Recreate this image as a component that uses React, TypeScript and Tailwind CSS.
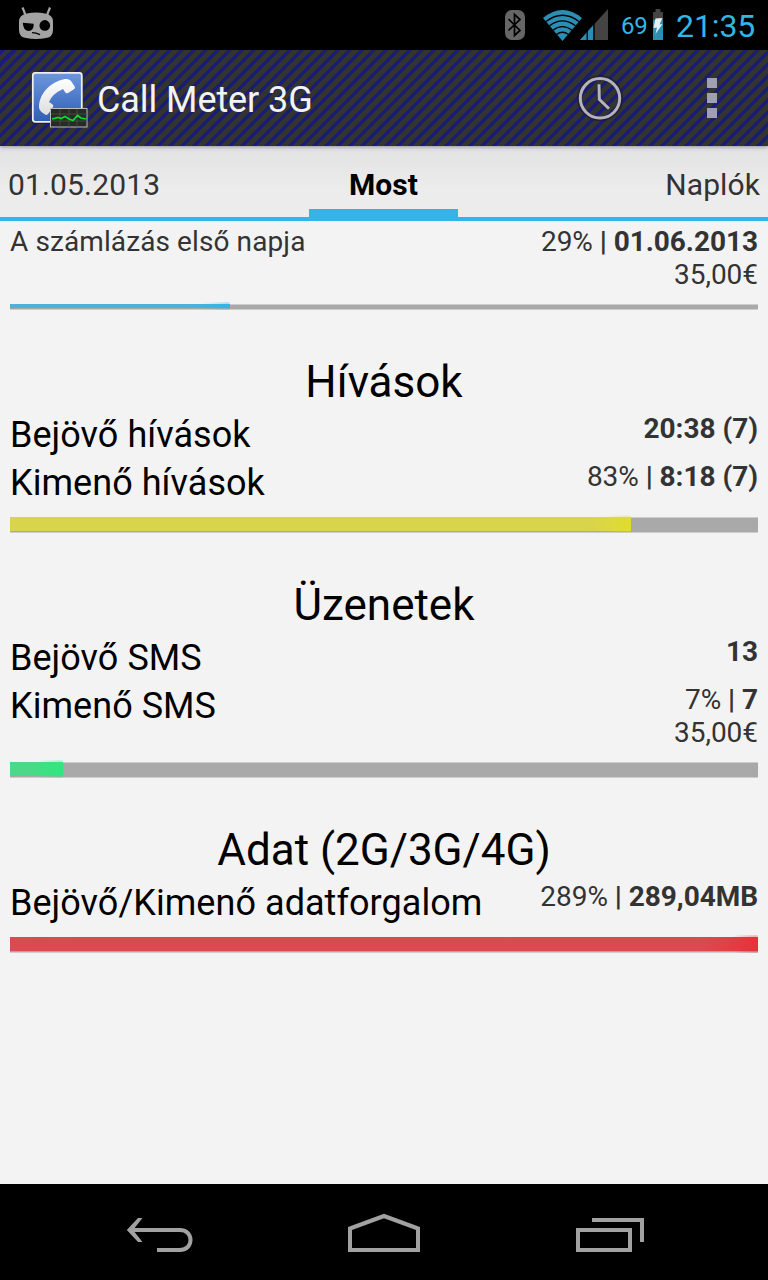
import type { ReactNode } from "react";

function StatusBar() {
  return (
    <header className="flex h-[50px] shrink-0 items-center bg-black pl-[18px] pr-[12px] text-[#33b5e5]">
      <svg width="36" height="34" viewBox="0 0 36 34" className="mb-[2px]">
        <path d="M4.500 .5 7.500 8M32 .5 29 8" stroke="#a3a3a3" strokeWidth="2.200" />
        <path d="M9 6.500Q18 4.500 27 6.500Q35 7.500 35 15V23Q35 30 28 31Q18 33 8 31Q1 30 1 23V15Q1 7.500 9 6.500Z" fill="#a3a3a3" />
        <path d="M4.800 15.800 15.700 16.800Q16 24 10.300 24Q5.300 23.500 4.800 15.800Z" fill="#000" />
        <circle cx="26.800" cy="18.400" r="5.300" fill="#000" />
        <path d="M14 25.700 18 26.100 22 27.600" stroke="#000" strokeWidth="1.200" fill="none" />
      </svg>
      <div className="ml-auto flex items-center">
        <svg width="20" height="30" viewBox="0 0 20 30">
          <rect width="20" height="30" rx="7" fill="#666" />
          <path d="M3.500 9 15 20.500 9.500 25.500V4.500L15 9.500 3.500 20.500" stroke="#000" strokeWidth="1.700" fill="none" />
        </svg>
        <svg width="66" height="32" viewBox="543 9 66 32" className="ml-[18px]">
          <path d="M543 18Q562.500 2 582 18L562.500 41Z" fill="#2b8fb5" />
          <path d="M546 21.500Q562.500 9 579 21.500M549.500 25.700Q562.500 16 575.500 25.700M553 30.200Q562.500 23 572 30.200M556.500 34.500Q562.500 30 568.500 34.500" fill="none" stroke="#000" strokeWidth="1.400" />
          <path d="M580 40 608 9V40Z" fill="#444" />
          <path d="M580 40 593 25.500V40Z" fill="#2b8fb5" />
          <path d="M594 22V40M587.200 30V40" stroke="#000" strokeWidth="1.300" />
        </svg>
        <span className="ml-[12px] w-[27px] whitespace-nowrap pt-px text-[24px] leading-[50px] tracking-[-0.2px]">69</span>
        <svg width="10" height="32" viewBox="0 0 10 32" className="ml-[5px]">
          <path d="M2.500 0H7.500V3H10V12H0V3H2.500Z" fill="#444" />
          <rect y="11" width="10" height="20" fill="#2b8fb5" />
          <path d="M2.500 9.500 9.500 9 6.500 15.500 9.500 15 2.500 25 4 18.500 .5 19Z" fill="#e4f0f4" />
        </svg>
        <span className="ml-[13px] w-[80px] whitespace-nowrap pt-[2px] text-[32px] leading-[50px] tracking-[-0.1px]">21:35</span>
      </div>
    </header>
  );
}

function AppIcon() {
  return (
    <svg width="60" height="60" viewBox="30 70 60 60" className="mt-[4px] shrink-0">
      <defs>
        <linearGradient id="tile" x1="0" y1="0" x2="0" y2="1">
          <stop offset="0" stopColor="#6d97de" />
          <stop offset="1" stopColor="#2f5fb4" />
        </linearGradient>
        <linearGradient id="handset" x1="0" y1="0" x2="0" y2="1">
          <stop offset="0" stopColor="#fff" />
          <stop offset="1" stopColor="#dedede" />
        </linearGradient>
      </defs>
      <rect x="31.500" y="72" width="51.500" height="52" rx="3.500" fill="#181838" opacity="0.600" />
      <rect x="32.800" y="72.800" width="49" height="49" rx="2.500" fill="url(#tile)" stroke="#eee" strokeWidth="1.800" />
      <path d="M39 107C39 95 49 82 65 79Q69 78.500 71 81L75 87Q75 89 73.500 89.500L68 93Q66 94 65 92L63 89Q52 94 49 102L52 104Q54 105 53 107L48.500 113.500Q46.500 116 44.500 114Q39 111 39 107Z" fill="url(#handset)" />
      <rect x="50.500" y="108.500" width="36.500" height="18.500" fill="#252b25" stroke="#bbb" />
      <path d="M60 109V127M69 109V127M77 109V127M51 114H87M51 121H87" stroke="#4b504b" strokeWidth="0.800" />
      <path d="M52 119 58 117.500 61 118.500 65 116.500 69 119 73 120.500 77.500 115.500 81 118 86 119" fill="none" stroke="#00e02c" strokeWidth="1.700" />
    </svg>
  );
}

function ActionBar() {
  return (
    <div className="z-10 flex h-[96px] shrink-0 items-center bg-[repeating-linear-gradient(135deg,#1b1b79_0px,#1b1b79_3.536px,#333_3.536px,#333_8.485px)] pl-[30px] pr-[51px] shadow-[0_1px_4px_rgba(0,0,0,0.35)]">
      <AppIcon />
      <h1 className="ml-[7px] mt-[4px] whitespace-nowrap text-[36px] leading-[42px] tracking-[-0.08px] text-[#f3f3f3]">Call Meter 3G</h1>
      <svg width="46" height="46" viewBox="-23 -23.300 46 46" className="ml-auto">
        <circle r="20.500" fill="none" stroke="#1b1b2b" strokeWidth="5" opacity="0.650" />
        <path d="M-1-14V1L9 11" fill="none" stroke="#1b1b2b" strokeWidth="4.500" opacity="0.600" />
        <circle r="19.700" fill="none" stroke="#b5b4bd" strokeWidth="3" />
        <path d="M-1-14-.7 1 9 10.500" fill="none" stroke="#b5b4bd" strokeWidth="3" />
      </svg>
      <div className="ml-[84px] flex flex-col gap-[5px]">
        <i className="size-[10px] bg-[#a1a0b1]" />
        <i className="size-[10px] bg-[#a1a0b1]" />
        <i className="size-[10px] bg-[#a1a0b1]" />
      </div>
    </div>
  );
}

function Tabs() {
  return (
    <nav className="grid h-[75px] shrink-0 grid-cols-[309px_149px_310px] border-b-4 border-[#33b5e5] bg-linear-to-b from-[#e2e2e2] to-[#ececec] to-60% text-[30px] leading-[35px] text-[#333]">
      <span className="pl-[8px] pt-[21px] tracking-[0.15px]">01.05.2013</span>
      <span className="flex flex-col justify-between pt-[21px] text-center font-bold text-black">
        Most
        <i className="h-[8px] bg-[#33b5e5]" />
      </span>
      <span className="pr-[8px] pt-[21px] text-right tracking-[0.1px]">Naplók</span>
    </nav>
  );
}

function Row({ label, small, percent, value, cost }: { label: string; small?: boolean; percent?: string; value: string; cost?: string }) {
  return (
    <div className="flex min-h-[48px] justify-between whitespace-nowrap">
      <span className={small ? "text-[28px] leading-[33px] tracking-[0.1px] text-[#333]" : "pt-[2px] text-[36px] leading-[42px] tracking-[0.05px] text-black"}>{label}</span>
      <span className="text-right text-[28px] leading-[33px] tracking-[-0.04px] text-[#333]">
        {percent && (
          <>
            {percent} <span className="font-bold">|</span>{" "}
          </>
        )}
        <b>{value}</b>
        {cost && <div>{cost}</div>}
      </span>
    </div>
  );
}

function Bar({ fill, glow, thin }: { fill: string; glow: string; thin?: boolean }) {
  return (
    <div className={`${thin ? "h-[6px]" : "h-[16px]"} border-y border-[#cdcdcd] bg-[#a9a9a9]`}>
      <div className={`relative -top-px ${thin ? "h-[4px]" : "h-[14px]"} ${fill}`}>
        <div className={`absolute -inset-y-[2px] right-0 w-[28px] rounded-l-full mask-l-from-10% opacity-40 blur-[1.500px] ${glow}`} />
      </div>
    </div>
  );
}

function Group({ title, children }: { title: string; children: ReactNode }) {
  return (
    <section className="mt-[46px]">
      <h2 className="mb-[4px] text-center text-[44px] leading-[52px] text-black">{title}</h2>
      {children}
    </section>
  );
}

function NavBar() {
  return (
    <footer className="flex h-[96px] shrink-0 items-start bg-black pl-[124px] pr-[122px] pt-[28px]">
      <svg width="72" height="50" viewBox="124 1212 72 50" fill="none" stroke="#a1a1a1" strokeWidth="4">
        <path d="M131 1230H180C194 1230 194 1250 180 1250H157" />
        <path d="M142.500 1218H138L126.800 1230 138 1242H142.500L133 1230Z" fill="#a1a1a1" stroke="none" />
      </svg>
      <svg width="76" height="50" viewBox="346 1212 76 50" className="ml-[150px]" fill="none" stroke="#a1a1a1" strokeWidth="4">
        <path d="M350 1250V1228.500L384 1216 418 1228.500V1250Z" />
      </svg>
      <svg width="72" height="50" viewBox="574 1212 72 50" className="ml-auto" fill="none" stroke="#a1a1a1" strokeWidth="4">
        <path d="M578 1230H630V1250H578Z" />
        <path d="M592 1220H642V1242" />
      </svg>
    </footer>
  );
}

export default function App() {
  return (
    <div className="flex h-[1280px] w-[768px] flex-col overflow-hidden bg-[#f3f3f3] font-[Roboto,sans-serif]">
      <StatusBar />
      <ActionBar />
      <Tabs />
      <main className="flex-1 px-[10px] pt-[4px]">
        <Row small label="A számlázás első napja" percent="29%" value="01.06.2013" cost="35,00€" />
        <div className="mt-[13px]">
          <Bar thin fill="w-[220px] bg-linear-to-r from-[#4bb2dc] from-80% to-[#33b5e5]" glow="bg-[#33b5e5]" />
        </div>
        <Group title="Hívások">
          <Row label="Bejövő hívások" value="20:38 (7)" />
          <Row label="Kimenő hívások" percent="83%" value="8:18 (7)" />
          <div className="mt-[9px]">
            <Bar fill="w-[621px] bg-linear-to-r from-[#d8d44b] from-93% to-[#e0dc30]" glow="bg-[#e0dc30]" />
          </div>
        </Group>
        <Group title="Üzenetek">
          <Row label="Bejövő SMS" value="13" />
          <Row label="Kimenő SMS" percent="7%" value="7" cost="35,00€" />
          <div className="mt-[13px]">
            <Bar fill="w-[53px] bg-linear-to-r from-[#4bd888] from-30% to-[#33e57f]" glow="bg-[#33e57f]" />
          </div>
        </Group>
        <Group title="Adat (2G/3G/4G)">
          <Row label="Bejövő/Kimenő adatforgalom" percent="289%" value="289,04MB" />
          <div className="mt-[9px]">
            <Bar fill="w-full bg-linear-to-r from-[#d84b50] from-92% to-[#e5333a]" glow="bg-[#e5333a]" />
          </div>
        </Group>
      </main>
      <NavBar />
    </div>
  );
}
